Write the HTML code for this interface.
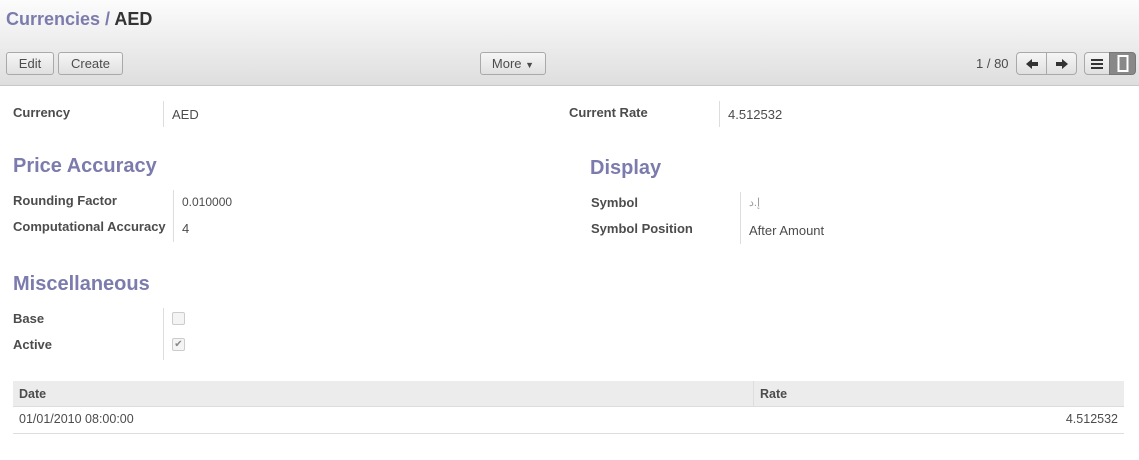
<!DOCTYPE html><html><head><style>
body{margin:0;width:1139px;height:460px;position:relative;font-family:"Liberation Sans",Arial,sans-serif;font-size:13px;color:#4c4c4c;background:#fff;overflow:hidden}
.a{position:absolute;white-space:nowrap}
.hdr{position:absolute;left:0;top:0;width:1139px;height:85px;background:linear-gradient(#fcfcfc,#dedede);border-bottom:1px solid #c8c8c8}
.btn{position:absolute;top:52px;height:21px;border:1px solid #a9a9a9;border-radius:3px;background:linear-gradient(#f6f6f6,#e0e0e0);font-size:13px;color:#4c4c4c;text-align:center;line-height:21px;box-sizing:content-box}
.l{font-weight:bold;color:#4c4c4c}
.h{font-size:20px;font-weight:bold;color:#7c7bad}
.sep{position:absolute;width:1px;background:#ddd}
.cb{position:absolute;width:11px;height:11px;border:1px solid #ccc;border-radius:2px;background:#f4f4f4}
</style></head><body>
<div class="hdr"></div>
<div class="a" style="left:6px;top:9px;font-size:18px;font-weight:bold;color:#7c7bad">Currencies / <span style="color:#333">AED</span></div>
<div class="btn" style="left:6px;width:46px">Edit</div>
<div class="btn" style="left:58px;width:63px">Create</div>
<div class="btn" style="left:480px;width:64px">More <span style="font-size:9px">▼</span></div>
<div class="a" style="left:976px;top:56px;color:#4c4c4c">1 / 80</div>
<div class="btn" style="left:1016px;width:29px;border-radius:4px 0 0 4px"><svg width="14" height="12" style="margin-top:5px"><path d="M1 6L7 1V4H13V8H7V11Z" fill="#333"/></svg></div>
<div class="btn" style="left:1046px;width:29px;border-radius:0 4px 4px 0"><svg width="14" height="12" style="margin-top:5px"><path d="M13 6L7 1V4H1V8H7V11Z" fill="#333"/></svg></div>
<div class="btn" style="left:1084px;width:24px;border-radius:4px 0 0 4px"><svg width="14" height="12" style="margin-top:5px"><rect x="1" y="1" width="12" height="2" fill="#333"/><rect x="1" y="5" width="12" height="2" fill="#333"/><rect x="1" y="9" width="12" height="2" fill="#333"/></svg></div>
<div class="btn" style="left:1109px;width:25px;border-radius:0 4px 4px 0;background:#888;border-color:#777"><svg width="14" height="18" style="margin-top:2px"><rect x="2.5" y="1" width="9" height="15" fill="none" stroke="#fff" stroke-width="2"/></svg></div>

<div class="a l" style="left:13px;top:105px">Currency</div>
<div class="sep" style="left:163px;top:101px;height:26px"></div>
<div class="a" style="left:172px;top:107px">AED</div>
<div class="a l" style="left:569px;top:105px">Current Rate</div>
<div class="sep" style="left:719px;top:101px;height:26px"></div>
<div class="a" style="left:728px;top:107px">4.512532</div>

<div class="a h" style="left:13px;top:155px">Price Accuracy</div>
<div class="a l" style="left:13px;top:193px">Rounding Factor</div>
<div class="a l" style="left:13px;top:219px">Computational Accuracy</div>
<div class="sep" style="left:173px;top:190px;height:52px"></div>
<div class="a" style="left:182px;top:195px;font-size:12px">0.010000</div>
<div class="a" style="left:182px;top:221px">4</div>

<div class="a h" style="left:590px;top:157px">Display</div>
<div class="a l" style="left:591px;top:195px">Symbol</div>
<div class="a l" style="left:591px;top:221px">Symbol Position</div>
<div class="sep" style="left:740px;top:192px;height:52px"></div>
<div class="a" style="left:749px;top:196px;color:#999;font-size:11px" dir="ltr"><bdo dir="ltr">د.إ</bdo></div>
<div class="a" style="left:749px;top:223px">After Amount</div>

<div class="a h" style="left:13px;top:273px">Miscellaneous</div>
<div class="a l" style="left:13px;top:311px">Base</div>
<div class="a l" style="left:13px;top:337px">Active</div>
<div class="sep" style="left:163px;top:308px;height:52px"></div>
<div class="cb" style="left:172px;top:312px"></div>
<div class="cb" style="left:172px;top:338px;color:#888;font-size:10px;line-height:11px;text-align:center">✔</div>

<div class="a" style="left:13px;top:381px;width:1111px;height:25px;background:#ececec;border-bottom:1px solid #ddd"></div>
<div class="sep" style="left:753px;top:381px;height:25px"></div>
<div class="a l" style="left:19px;top:387px;font-size:12.5px">Date</div>
<div class="a l" style="left:760px;top:387px;font-size:12.5px">Rate</div>
<div class="a" style="left:19px;top:412px;font-size:12.5px">01/01/2010 08:00:00</div>
<div class="a" style="right:21px;top:412px;font-size:12.5px">4.512532</div>
<div class="a" style="left:13px;top:433px;width:1111px;height:1px;background:#ddd"></div>
</body></html>
